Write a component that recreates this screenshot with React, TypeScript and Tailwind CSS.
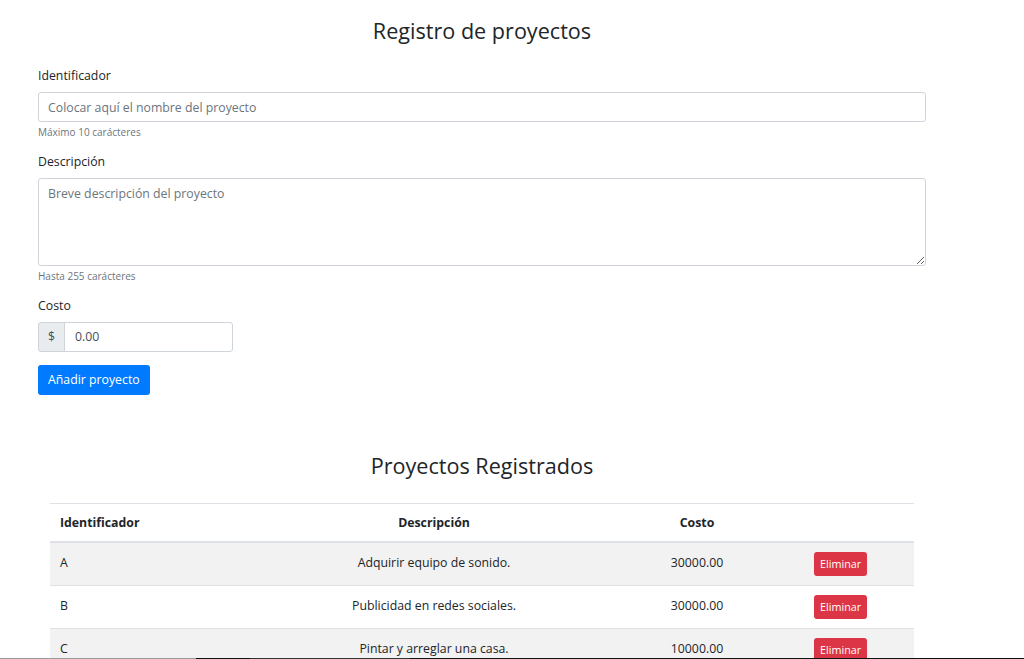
import { useState } from "react"

interface Proyecto {
  id: string
  descripcion: string
  costo: string
}

const proyectos: Proyecto[] = [
  { id: "A", descripcion: "Adquirir equipo de sonido.", costo: "30000.00" },
  { id: "B", descripcion: "Publicidad en redes sociales.", costo: "30000.00" },
  { id: "C", descripcion: "Pintar y arreglar una casa.", costo: "10000.00" },
]

export default function App() {
  const [nombre, setNombre] = useState("")
  const [descripcion, setDescripcion] = useState("")
  const [costo, setCosto] = useState("0.00")

  return (
    <div className="min-h-[659px] bg-white font-['Segoe_UI','Open_Sans',sans-serif] text-[12.3px] leading-[1.5] text-[#212529]">
      {/* Formulario */}
      <div className="ml-[38px] w-[888px] pt-[17px]">
        <h3 className="text-center text-[21.6px] font-normal leading-[1.25]">Registro de proyectos</h3>

        <form className="mt-[23px]" onSubmit={(e) => e.preventDefault()}>
          <div className="mb-[13px]">
            <label className="mb-[7px] block">Identificador</label>
            <input
              type="text"
              value={nombre}
              onChange={(e) => setNombre(e.target.value)}
              placeholder="Colocar aquí el nombre del proyecto"
              className="block h-[30px] w-full rounded-[3px] border border-[#ced4da] px-[9px] text-[12.3px] outline-none placeholder:text-[#6c757d]"
            />
            <small className="mt-[3px] block text-[10px] text-[#6c757d]">Máximo 10 carácteres</small>
          </div>

          <div className="mb-[13px]">
            <label className="mb-[6px] block">Descripción</label>
            <textarea
              value={descripcion}
              onChange={(e) => setDescripcion(e.target.value)}
              placeholder="Breve descripción del proyecto"
              className="block h-[88px] w-full rounded-[3px] border border-[#ced4da] px-[9px] py-[6px] text-[12.3px] outline-none placeholder:text-[#6c757d]"
            />
            <small className="mt-[3px] block text-[10px] text-[#6c757d]">Hasta 255 carácteres</small>
          </div>

          <div className="mb-[13px]">
            <label className="mb-[7px] block">Costo</label>
            <div className="flex h-[30px] w-[195px]">
              <span className="flex w-[27px] items-center justify-center rounded-l-[3px] border border-[#ced4da] bg-[#e9ecef] text-[#495057]">
                $
              </span>
              <input
                type="text"
                value={costo}
                onChange={(e) => setCosto(e.target.value)}
                className="-ml-px min-w-0 flex-1 rounded-r-[3px] border border-[#ced4da] px-[10px] text-[12.3px] text-[#495057] outline-none"
              />
            </div>
          </div>

          <button
            type="submit"
            className="h-[30px] rounded-[3px] bg-[#007bff] px-[10px] text-[12.3px] text-white"
          >
            Añadir proyecto
          </button>
        </form>
      </div>

      {/* Tabla */}
      <div className="mt-[57px] ml-[50px] w-[864px]">
        <h3 className="text-center text-[21.6px] font-normal leading-[1.25]">Proyectos Registrados</h3>

        <table className="mt-[24px] w-full table-fixed border-collapse">
          <colgroup>
            <col className="w-[228px]" />
            <col className="w-[312px]" />
            <col className="w-[214px]" />
            <col className="w-[110px]" />
          </colgroup>
          <thead>
            <tr className="border-t border-b-2 border-[#dee2e6]">
              <th className="px-[10px] pt-[10px] pb-[8px] text-left font-bold">Identificador</th>
              <th className="px-[10px] pt-[10px] pb-[8px] text-center font-bold">Descripción</th>
              <th className="px-[10px] pt-[10px] pb-[8px] text-center font-bold">Costo</th>
              <th className="px-[10px] pt-[10px] pb-[8px]" />
            </tr>
          </thead>
          <tbody>
            {proyectos.map((p, i) => (
              <tr key={p.id} className={`border-t border-[#dee2e6] ${i % 2 === 0 ? "bg-[#f2f2f2]" : "bg-white"}`}>
                <td className="px-[10px] pt-[8px] pb-[10px]">{p.id}</td>
                <td className="px-[10px] pt-[8px] pb-[10px] text-center">{p.descripcion}</td>
                <td className="px-[10px] pt-[8px] pb-[10px] text-center">{p.costo}</td>
                <td className="px-[10px] pt-[9px] pb-[9px]">
                  <button className="h-[24px] rounded-[3px] bg-[#dc3545] px-[6px] text-[10.8px] text-white">
                    Eliminar
                  </button>
                </td>
              </tr>
            ))}
          </tbody>
        </table>
      </div>

      {/* borde inferior de la captura */}
      <div className="fixed bottom-0 left-0 right-0 flex h-px">
        <div className="w-[196px] bg-[#9a9a9a]" />
        <div className="w-[54px] bg-[#111]" />
        <div className="w-[160px] bg-[#333]" />
        <div className="flex-1 bg-[#111]" />
      </div>
    </div>
  )
}
